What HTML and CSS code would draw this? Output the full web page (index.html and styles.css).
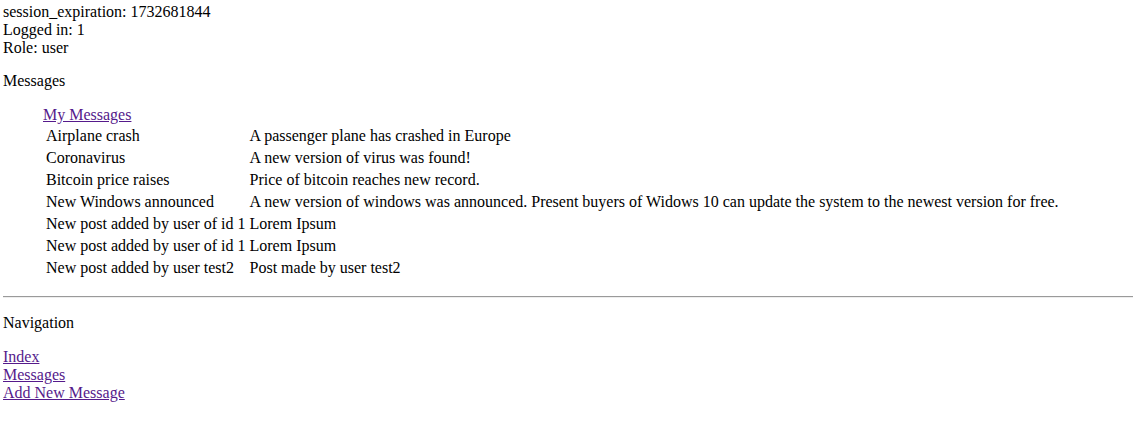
FILE: index.html
```html
<!DOCTYPE html>
<html>
<head>
<meta charset="utf-8">
<link rel="stylesheet" href="styles.css">
</head>
<body class="page">
<div class="info">
<div>session_expiration: 1732681844</div>
<div>Logged in: 1</div>
<div>Role: user</div>
</div>
<p class="heading heading-first">Messages</p>
<div class="msg-block">
<table class="msg-table">
<caption class="caption"><a class="link" href="#">My Messages</a></caption>
<tr><td>Airplane crash</td><td>A passenger plane has crashed in Europe</td></tr>
<tr><td>Coronavirus</td><td>A new version of virus was found!</td></tr>
<tr><td>Bitcoin price raises</td><td>Price of bitcoin reaches new record.</td></tr>
<tr><td>New Windows announced</td><td>A new version of windows was announced. Present buyers of Widows 10 can update the system to the newest version for free.</td></tr>
<tr><td>New post added by user of id 1</td><td>Lorem Ipsum</td></tr>
<tr><td>New post added by user of id 1</td><td>Lorem Ipsum</td></tr>
<tr><td>New post added by user test2</td><td>Post made by user test2</td></tr>
</table>
</div>
<hr class="rule">
<p class="heading">Navigation</p>
<div class="nav">
<a class="link" href="#">Index</a><br>
<a class="link" href="#">Messages</a><br>
<a class="link" href="#">Add New Message</a>
</div>
</body>
</html>
```
FILE: styles.css
```css
html { font-family: "Liberation Serif", "Times New Roman", serif; font-size: 16px; }
.page { margin: 3px 0 0 3px; color: #000; background: #fff; line-height: 18px; }
.heading { margin: 14px 0 16px; }
.heading-first { margin-top: 15px; }
.msg-block { margin: 16px 0 16px 40px; }
.msg-table { border-spacing: 2px; border-collapse: separate; }
.msg-table td { padding: 1px; white-space: nowrap; vertical-align: middle; }
.caption { text-align: left; }
.link { color: #551a8b; text-decoration: underline; }
.rule { margin: 16px 0; border: 0; border-top: 1px solid #9a9a9a; border-bottom: 1px solid #eeeeee; height: 0; }
.nav { margin-top: 15px; }
```
